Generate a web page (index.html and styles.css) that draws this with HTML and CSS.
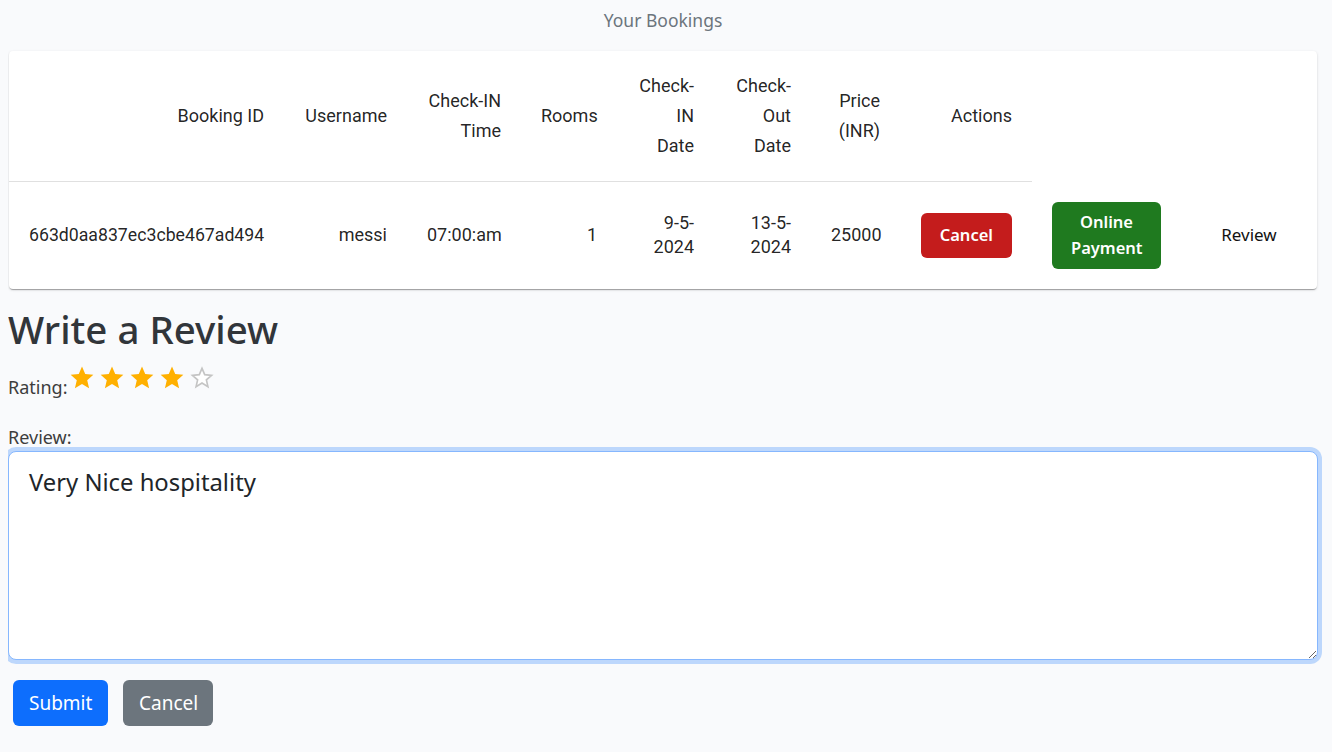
FILE: index.html
```html
<!DOCTYPE html>
<html lang="en">
<head>
<meta charset="utf-8">
<title>Your Bookings</title>
<link rel="stylesheet" href="styles.css">
</head>
<body>
<div class="page">
  <h2 class="page-title">Your Bookings</h2>
  <div class="card">
    <table class="bookings">
      <colgroup>
        <col class="c-id"><col class="c-user"><col class="c-time"><col class="c-rooms">
        <col class="c-in"><col class="c-out"><col class="c-price"><col class="c-actions">
        <col class="c-pay"><col class="c-review">
      </colgroup>
      <thead>
        <tr>
          <th>Booking ID</th>
          <th>Username</th>
          <th>Check-IN Time</th>
          <th>Rooms</th>
          <th>Check-<br>IN<br>Date</th>
          <th>Check-<br>Out<br>Date</th>
          <th>Price<br>(INR)</th>
          <th>Actions</th>
        </tr>
      </thead>
      <tbody>
        <tr>
          <td>663d0aa837ec3cbe467ad494</td>
          <td>messi</td>
          <td>07:00:am</td>
          <td>1</td>
          <td>9-5-<br>2024</td>
          <td>13-5-<br>2024</td>
          <td>25000</td>
          <td><button class="btn btn-danger">Cancel</button></td>
          <td><button class="btn btn-success">Online<br>Payment</button></td>
          <td class="center"><button class="btn btn-plain">Review</button></td>
        </tr>
      </tbody>
    </table>
  </div>

  <form class="review-form">
    <h1 class="review-title">Write a Review</h1>
    <div class="rating">
      <span class="rating-label">Rating:</span><span class="stars"><svg class="star" viewBox="0 0 24 24" width="26" height="25"><path class="on" d="M12 1.5l3.1 7.2 7.8.7-5.9 5.2 1.8 7.7L12 18.2l-6.8 4.1 1.8-7.700-5.9-5.2 7.8-.7z"/></svg><svg class="star" viewBox="0 0 24 24" width="26" height="25"><path class="on" d="M12 1.5l3.1 7.2 7.8.7-5.9 5.2 1.8 7.7L12 18.2l-6.8 4.1 1.8-7.7-5.9-5.2 7.8-.7z"/></svg><svg class="star" viewBox="0 0 24 24" width="26" height="25"><path class="on" d="M12 1.5l3.1 7.2 7.8.7-5.9 5.2 1.8 7.7L12 18.2l-6.8 4.1 1.8-7.7-5.9-5.2 7.8-.7z"/></svg><svg class="star" viewBox="0 0 24 24" width="26" height="25"><path class="on" d="M12 1.5l3.1 7.2 7.8.7-5.9 5.2 1.8 7.7L12 18.2l-6.8 4.1 1.8-7.7-5.9-5.2 7.8-.7z"/></svg><svg class="star" viewBox="0 0 24 24" width="26" height="25"><path class="off" d="M12 3.2l2.6 6.1 6.6.6-5 4.4 1.5 6.5L12 17.3l-5.7 3.5 1.5-6.5-5-4.4 6.6-.6z"/></svg></span>
    </div>
    <label class="field-label" for="review">Review:</label>
    <textarea id="review" class="review-input">Very Nice hospitality</textarea>
    <div class="form-actions">
      <button type="button" class="btn-lg btn-primary">Submit</button>
      <button type="button" class="btn-lg btn-secondary">Cancel</button>
    </div>
  </form>
</div>
</body>
</html>
```

FILE: styles.css
```css
* { box-sizing: border-box; }

html, body { height: 100%; }

body {
  margin: 8px 8px 0;
  background: #f9fafc;
  font-family: "Noto Sans", "Open Sans", sans-serif;
  color: #212529;
  overflow: hidden;
}

.page {
  width: 1310px;
}

.page-title {
  margin: 0 0 19px;
  text-align: center;
  font-size: 17.5px;
  line-height: 24px;
  font-weight: 400;
  color: #6c757d;
}

.card {
  margin: 0 1px;
  background: #fff;
  border-radius: 4px;
  box-shadow: 0 2px 1px -1px rgba(0,0,0,.2), 0 1px 1px 0 rgba(0,0,0,.14), 0 1px 3px 0 rgba(0,0,0,.12);
}

.bookings {
  width: 1308px;
  table-layout: fixed;
  border-collapse: collapse;
  font-family: Roboto, "Liberation Sans", sans-serif;
  font-size: 18px;
  color: rgba(0,0,0,.87);
}

.c-id { width: 275px; }
.c-user { width: 123px; }
.c-time { width: 114px; }
.c-rooms { width: 96px; }
.c-in { width: 97px; }
.c-out { width: 97px; }
.c-price { width: 89px; }
.c-actions { width: 132px; }
.c-pay { width: 149px; }
.c-review { width: 136px; }

.bookings th {
  padding: 20px;
  line-height: 30px;
  font-weight: 400;
  text-align: right;
  vertical-align: middle;
  border-bottom: 1px solid #e0e0e0;
}

.bookings td {
  padding: 20px;
  line-height: 24px;
  text-align: right;
  vertical-align: middle;
}

.bookings td:first-child { font-size: 17.7px; }

.bookings td.center { text-align: center; }

.btn {
  font-family: "Noto Sans", "Open Sans", sans-serif;
  border: 1px solid transparent;
  border-radius: 6px;
  cursor: pointer;
}

.btn-danger {
  background: #c41c1c;
  color: #fff;
  font-weight: 600;
  font-size: 16.5px;
  line-height: 26px;
  padding: 8px 18px 9px;
}

.btn-success {
  background: #1f7a1f;
  color: #fff;
  font-weight: 600;
  font-size: 16.5px;
  line-height: 26px;
  padding: 6px 18px 7px;
  width: 109px;
}

.btn-plain {
  background: transparent;
  color: #111;
  font-size: 17px;
  line-height: 26px;
  padding: 8px 12px;
}

.review-form {
  height: 461px;
  border-bottom: 1px solid #cfcfcf;
}

.review-title {
  margin: 16px 0 0;
  font-size: 38.5px;
  line-height: 48px;
  font-weight: 500;
  color: #31353a;
}

.rating {
  margin-top: 12px;
  font-size: 18px;
  line-height: 30px;
  color: #3d3d3d;
}

.stars { margin-left: 2px; }

.star {
  vertical-align: 4px;
  margin-right: 4px;
}

.star .on { fill: #ffb000; }
.star .off { fill: #fff; stroke: #c4c4c4; stroke-width: 1.6; }

.field-label {
  display: block;
  margin-top: 23px;
  font-size: 18px;
  line-height: 25px;
  color: #3d3d3d;
}

.review-input {
  display: block;
  width: 1310px;
  height: 209px;
  margin-top: 1px;
  padding: 12px 20px;
  font-family: "Noto Sans", "Open Sans", sans-serif;
  font-size: 23.8px;
  line-height: 36px;
  color: #212529;
  background: #fff;
  border: 1px solid #86b7fe;
  border-radius: 8px;
  outline: none;
  box-shadow: 0 0 0 4px rgba(13,110,253,.25);
  resize: vertical;
}

.form-actions {
  display: flex;
  gap: 15px;
  padding: 20px 5px 0;
}

.btn-lg {
  font-family: "Noto Sans", "Open Sans", sans-serif;
  font-size: 19px;
  line-height: 28px;
  padding: 8px 15px;
  border: 1px solid transparent;
  border-radius: 6px;
  color: #fff;
  cursor: pointer;
}

.btn-primary { background: #0d6efd; width: 95px; }
.btn-secondary { background: #6c757d; width: 90px; }
```
